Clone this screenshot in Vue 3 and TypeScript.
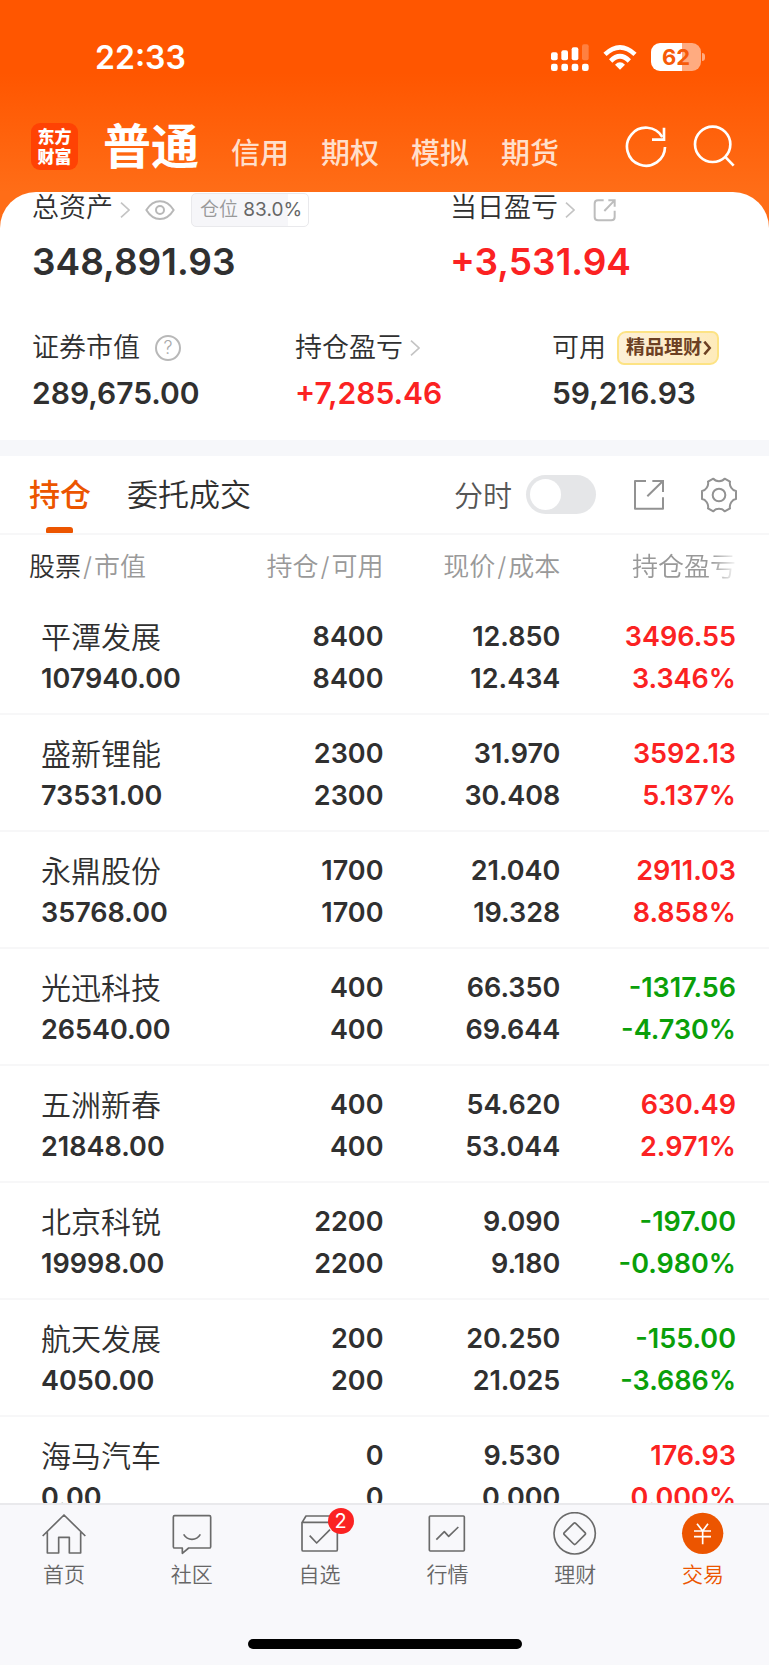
<script setup lang="ts">
import { ref } from 'vue'

interface Holding {
  name: string
  value: string
  held: string
  available: string
  price: string
  cost: string
  profit: string
  rate: string
}

interface Tab {
  label: string
  icon: 'home' | 'chat' | 'watch' | 'chart' | 'wealth' | 'trade'
  badge?: number
}

const accounts = ['信用', '期权', '模拟', '期货']

const holdings: Holding[] = [
  { name: '平潭发展', value: '107940.00', held: '8400', available: '8400', price: '12.850', cost: '12.434', profit: '3496.55', rate: '3.346%' },
  { name: '盛新锂能', value: '73531.00', held: '2300', available: '2300', price: '31.970', cost: '30.408', profit: '3592.13', rate: '5.137%' },
  { name: '永鼎股份', value: '35768.00', held: '1700', available: '1700', price: '21.040', cost: '19.328', profit: '2911.03', rate: '8.858%' },
  { name: '光迅科技', value: '26540.00', held: '400', available: '400', price: '66.350', cost: '69.644', profit: '-1317.56', rate: '-4.730%' },
  { name: '五洲新春', value: '21848.00', held: '400', available: '400', price: '54.620', cost: '53.044', profit: '630.49', rate: '2.971%' },
  { name: '北京科锐', value: '19998.00', held: '2200', available: '2200', price: '9.090', cost: '9.180', profit: '-197.00', rate: '-0.980%' },
  { name: '航天发展', value: '4050.00', held: '200', available: '200', price: '20.250', cost: '21.025', profit: '-155.00', rate: '-3.686%' },
  { name: '海马汽车', value: '0.00', held: '0', available: '0', price: '9.530', cost: '0.000', profit: '176.93', rate: '0.000%' },
]

const tabs: Tab[] = [
  { label: '首页', icon: 'home' },
  { label: '社区', icon: 'chat' },
  { label: '自选', icon: 'watch', badge: 2 },
  { label: '行情', icon: 'chart' },
  { label: '理财', icon: 'wealth' },
  { label: '交易', icon: 'trade' },
]

const activeTab = ref('交易')
const timeline = ref(false)
</script>

<template>
  <div class="page">
    <header class="top">
      <div class="status">
        <time class="clock">22:33</time>
        <div class="status-icons">
          <svg class="signal" viewBox="501 131 114 81" fill="#fff" aria-hidden="true">
            <rect x="501" y="156" width="20" height="24" rx="6" />
            <rect x="532" y="150" width="20" height="30" rx="6" />
            <rect x="563" y="141" width="20" height="39" rx="6" />
            <rect x="594" y="132" width="20" height="48" rx="6" opacity=".25" />
            <rect x="501" y="190" width="20" height="22" rx="7" />
            <rect x="532" y="190" width="20" height="22" rx="7" />
            <rect x="563" y="190" width="20" height="22" rx="7" />
            <rect x="594" y="190" width="20" height="22" rx="7" />
          </svg>
          <svg class="wifi" viewBox="656 131 102 78" fill="none" stroke="#fff" stroke-width="14" aria-hidden="true">
            <path d="M662 162Q707 120 752 162" />
            <path d="M679 182Q707 154 735 182" />
            <path d="M692 193Q707 179 722 193L707 208Z" fill="#fff" stroke="none" />
          </svg>
          <div class="battery"><span class="charge">62</span></div>
        </div>
      </div>
      <div class="nav">
        <div class="logo">东方<br />财富</div>
        <nav class="accounts">
          <a class="account current" href="#normal">普通</a>
          <a v-for="item in accounts" :key="item" class="account" href="#account">{{ item }}</a>
        </nav>
        <div class="actions">
          <button type="button" aria-label="刷新">
            <svg viewBox="721 375 126 132" fill="none" stroke="#fff" stroke-width="8">
              <path d="M841 441A57 57 0 1 1 833 411" />
              <path d="M838 383V419H802" />
            </svg>
          </button>
          <button type="button" aria-label="搜索">
            <svg viewBox="926 375 126 132" fill="none" stroke="#fff" stroke-width="8">
              <circle cx="985" cy="433" r="53" />
              <path d="M1022 470L1048 497" />
            </svg>
          </button>
        </div>
      </div>
    </header>

    <main class="sheet">
      <section class="summary">
        <div class="totals">
          <div>
            <div class="label">
              <span>总资产</span>
              <svg class="chevron" viewBox="360 600 30 48"><path d="M363 602L387 624L363 646" /></svg>
              <button class="eye" type="button" aria-label="隐藏金额">
                <svg viewBox="436 590 90 66" fill="none" stroke="#b8b8b8" stroke-width="6">
                  <path d="M440 623C462 588 500 588 522 623C500 659 462 659 440 623Z" stroke-linejoin="round" />
                  <circle cx="481" cy="623" r="12" />
                </svg>
              </button>
              <span class="position">仓位 <b>83.0%</b></span>
            </div>
            <div class="total">348,891.93</div>
          </div>
          <div>
            <div class="label">
              <span>当日盈亏</span>
              <svg class="chevron" viewBox="360 600 30 48"><path d="M363 602L387 624L363 646" /></svg>
              <button class="share-small" type="button" aria-label="分享当日盈亏">
                <svg viewBox="630 590 72 72" fill="none" stroke="#bdbdbd" stroke-width="6">
                  <path d="M662 597H645Q635 597 635 607V647Q635 657 645 657H685Q695 657 695 647V628" />
                  <path d="M664 629L694 598M676 597H695V616" />
                </svg>
              </button>
            </div>
            <div class="total up">+3,531.94</div>
          </div>
        </div>
        <div class="details">
          <div>
            <div class="label">
              <span>证券市值</span>
              <button class="help" type="button" aria-label="证券市值说明">?</button>
            </div>
            <div class="amount">289,675.00</div>
          </div>
          <div>
            <div class="label">
              <span>持仓盈亏</span>
              <svg class="chevron" viewBox="360 600 30 48"><path d="M363 602L387 624L363 646" /></svg>
            </div>
            <div class="amount up">+7,285.46</div>
          </div>
          <div>
            <div class="label">
              <span>可用</span>
              <a class="promo" href="#wealth">精品理财<svg viewBox="955 482 28 44"><path d="M959 484L976 504L959 524" /></svg></a>
            </div>
            <div class="amount">59,216.93</div>
          </div>
        </div>
      </section>

      <div class="toolbar">
        <div class="views">
          <button class="view current" type="button">持仓</button>
          <button class="view" type="button">委托成交</button>
        </div>
        <label class="timeline">
          <span>分时</span>
          <input v-model="timeline" class="switch" type="checkbox" role="switch" />
        </label>
        <button class="tool" type="button" aria-label="分享持仓">
          <svg viewBox="741 142 108 108" fill="none" stroke="#929292" stroke-width="6">
            <path d="M786 154H753V237H837V203" stroke-linejoin="round" />
            <path d="M805 154H837V187M790 200L836 155" />
          </svg>
        </button>
        <button class="tool" type="button" aria-label="设置">
          <svg viewBox="950 142 108 108" fill="none" stroke="#929292" stroke-width="6" stroke-linejoin="round">
            <path d="M987 147C994 157 1014 157 1021 147L1037 156C1034 168 1044 183 1055 184V208C1044 209 1034 224 1037 236L1021 245C1014 235 994 235 987 245L971 236C974 224 964 209 953 208V184C964 183 974 168 971 156Z" />
            <circle cx="1004" cy="196" r="19" />
          </svg>
        </button>
      </div>

      <div class="list">
        <table class="holdings">
          <colgroup>
            <col class="col-stock" />
            <col class="col-held" />
            <col class="col-price" />
            <col class="col-profit" />
          </colgroup>
          <thead>
            <tr>
              <th scope="col"><em>股票</em><i>/</i>市值</th>
              <th scope="col">持仓<i>/</i>可用</th>
              <th scope="col">现价<i>/</i>成本</th>
              <th scope="col"><span class="fade">持仓盈亏</span></th>
            </tr>
          </thead>
          <tbody>
            <tr v-for="row in holdings" :key="row.name">
              <td><span class="name">{{ row.name }}</span><span>{{ row.value }}</span></td>
              <td><span>{{ row.held }}</span><span>{{ row.available }}</span></td>
              <td><span>{{ row.price }}</span><span>{{ row.cost }}</span></td>
              <td :class="row.profit.startsWith('-') ? 'down' : 'up'">
                <span>{{ row.profit }}</span><span>{{ row.rate }}</span>
              </td>
            </tr>
          </tbody>
        </table>
      </div>
    </main>

    <footer class="tabbar">
      <nav class="tabs">
        <button
          v-for="tab in tabs"
          :key="tab.label"
          class="tab"
          :class="{ current: tab.label === activeTab }"
          type="button"
          @click="activeTab = tab.label"
        >
          <span class="tab-icon">
            <svg v-if="tab.icon === 'home'" viewBox="127 337 132 132">
              <path d="M129 409L193 346L257 409M143 398V460H177V413H209V460H243V398" />
            </svg>
            <svg v-else-if="tab.icon === 'chat'" viewBox="511 337 132 132">
              <path d="M525 348H629Q633 348 633 352V441Q633 445 629 445H567L548 461V445H525Q521 445 521 441V352Q521 348 525 348Z" />
              <path d="M552 404C564 424 590 424 602 404" />
            </svg>
            <svg v-else-if="tab.icon === 'watch'" viewBox="895 337 132 132">
              <path d="M907 369L919 349H1003L1013 369M907 368H1013V450Q1013 454 1009 454H911Q907 454 907 450Z" />
              <path d="M930 408L951 430L991 390" />
            </svg>
            <svg v-else-if="tab.icon === 'chart'" viewBox="127 337 132 132">
              <rect x="140" y="349" width="105" height="105" rx="3" />
              <path d="M161 420L185 396L198 410L227 382" />
            </svg>
            <svg v-else-if="tab.icon === 'wealth'" viewBox="511 337 132 132">
              <circle cx="576" cy="401" r="62" />
              <path d="M573 371Q576 368 579 371L607 399Q610 402 607 405L579 433Q576 436 573 433L545 405Q542 402 545 399Z" />
            </svg>
            <svg v-else viewBox="895 337 132 132">
              <circle class="coin" cx="960" cy="401" r="62" />
              <path class="yen" d="M943 372L960 394L976 372M960 394V434M934 394H985M934 411H985" />
            </svg>
            <span v-if="tab.badge" class="badge">{{ tab.badge }}</span>
          </span>
          <span>{{ tab.label }}</span>
        </button>
      </nav>
      <div class="home-bar"></div>
    </footer>
  </div>
</template>

<style>
html,
body {
  margin: 0;
  background: #f8f8fb;
}
</style>

<style scoped>
.page {
  display: flex;
  flex-direction: column;
  height: 100vh;
  overflow: hidden;
  background: #ff6d17;
  color: #303030;
  font-family: Inter, "Noto Sans CJK SC", sans-serif;
}

.page * {
  box-sizing: border-box;
}

button {
  padding: 0;
  border: 0;
  background: none;
  color: inherit;
  font: inherit;
}

a {
  color: inherit;
  text-decoration: none;
}

svg {
  display: block;
}

.top {
  flex: none;
  padding-bottom: 13px;
  background: linear-gradient(#ff5600 0, #ff5600 38%, #ff6d17 100%);
  color: #fff;
}

.status {
  display: flex;
  align-items: center;
  justify-content: space-between;
  height: 114px;
  padding: 0 64px 0 95px;
}

.clock {
  font-size: 32px;
  font-weight: 600;
}

.status-icons {
  display: flex;
  align-items: center;
  gap: 14px;
}

.signal {
  width: 38px;
  height: 27px;
}

.wifi {
  width: 34px;
  height: 26px;
}

.battery {
  display: flex;
  align-items: center;
}

.battery::after {
  width: 3px;
  height: 8px;
  margin-left: 1px;
  border-radius: 0 3px 3px 0;
  background: #ffab80;
  content: "";
}

.charge {
  width: 50px;
  border-radius: 9px;
  background: linear-gradient(90deg, #fff 63%, #ffab80 63%);
  color: #f65a08;
  font-size: 22px;
  font-weight: 700;
  line-height: 28px;
  text-align: center;
}

.nav {
  display: flex;
  align-items: center;
  height: 65px;
  padding: 0 34px 0 31px;
}

.logo {
  height: 47px;
  width: 47px;
  padding-top: 3px;
  border-radius: 9px;
  background: #ff4204;
  font-family: "Noto Sans CJK SC", sans-serif;
  font-size: 17px;
  font-weight: 900;
  line-height: 20px;
  text-align: center;
}

.accounts {
  display: flex;
  flex: 1;
  align-items: baseline;
  gap: 32px;
  margin-left: 25px;
  padding-top: 7px;
  line-height: 65px;
}

.account {
  color: #ffdfcb;
  font-size: 29px;
  font-weight: 500;
}

.account.current {
  color: #fff;
  font-size: 48px;
  font-weight: 700;
}

.actions {
  display: flex;
  gap: 26px;
}

.actions svg {
  width: 42px;
  height: 44px;
}

.sheet {
  display: flex;
  flex: 1;
  flex-direction: column;
  min-height: 0;
  border-radius: 36px 36px 0 0;
  background: #fff;
}

.summary {
  padding: 0 32px 28px;
  border-bottom: 16px solid #f6f7fa;
}

.totals {
  display: grid;
  grid-template-columns: 418fr 287fr;
}

.details {
  display: grid;
  grid-template-columns: 263fr 257fr 185fr;
  padding-top: 44px;
}

.label {
  display: flex;
  align-items: center;
  height: 35px;
  font-size: 27px;
  font-weight: 350;
  line-height: 32px;
  white-space: nowrap;
}

.totals .label > span:first-child {
  padding-bottom: 3px;
}

.chevron {
  width: 10px;
  height: 16px;
  margin-left: 7px;
  fill: none;
  stroke: #c4c4c4;
  stroke-width: 5;
}

.eye {
  margin: 0 16px 0 15px;
}

.eye svg {
  width: 30px;
  height: 22px;
}

.position {
  padding: 0 6px 0 8px;
  border: 1px solid #e9e9ec;
  border-radius: 5px;
  background: linear-gradient(90deg, #f6f6f9 83%, #fff 83%);
  color: #999;
  font-size: 19px;
  line-height: 32px;
}

.position b {
  color: #666;
  font-weight: 400;
}

.share-small {
  margin-left: 18px;
}

.share-small svg {
  width: 24px;
  height: 24px;
}

.total {
  padding-top: 11px;
  font-size: 37px;
  font-weight: 600;
  line-height: 48px;
}

.amount {
  padding-top: 9px;
  font-size: 30px;
  font-weight: 600;
  line-height: 38px;
}

.up {
  color: #fb2222;
}

.down {
  color: #0a9f0a;
}

.help {
  width: 26px;
  height: 26px;
  margin-left: 15px;
  border: 2px solid #b8b8b8;
  border-radius: 50%;
  color: #aaa;
  font-size: 18px;
  line-height: 22px;
}

.promo {
  display: flex;
  align-items: center;
  gap: 1px;
  height: 34px;
  margin-left: 11px;
  padding: 0 5px 0 7px;
  border: 2px solid #fde384;
  border-radius: 9px 7px 9px 7px;
  background: linear-gradient(90deg, #fdf0d8, #feebbb);
  color: #6c4023;
  font-size: 19px;
  font-weight: 700;
}

.promo svg {
  width: 9px;
  height: 14px;
  fill: none;
  stroke: #6c4023;
  stroke-width: 8;
}

.toolbar {
  display: flex;
  align-items: center;
  height: 79px;
  flex: none;
  padding: 0 32px 0 29px;
  border-bottom: 2px solid #f7f7f8;
}

.views {
  display: flex;
  flex: 1;
  gap: 36px;
  align-self: stretch;
}

.view {
  position: relative;
  padding-bottom: 4px;
  font-size: 31px;
  font-weight: 350;
}

.view.current {
  color: #ec5500;
  font-weight: 500;
}

.view.current::after {
  position: absolute;
  bottom: 0;
  left: 50%;
  width: 27px;
  height: 6px;
  margin-left: -14px;
  border-radius: 3px 3px 1px 1px;
  background: #ec5500;
  content: "";
}

.timeline {
  display: flex;
  align-items: center;
  gap: 14px;
  margin-right: 1px;
  color: #555;
  font-size: 29px;
  font-weight: 350;
}

.timeline span {
  padding-bottom: 2px;
}

.switch {
  display: flex;
  align-items: center;
  width: 70px;
  height: 39px;
  margin: 0;
  padding: 4px;
  border-radius: 20px;
  background: #e5e6e8;
  appearance: none;
}

.switch::before {
  width: 31px;
  height: 31px;
  border-radius: 50%;
  background: #fff;
  content: "";
}

.switch:checked {
  justify-content: flex-end;
  background: #ec5500;
}

.tool {
  margin-left: 34px;
}

.tool svg {
  width: 36px;
  height: 36px;
}

.list {
  flex: 1;
  min-height: 0;
  overflow-y: auto;
  scrollbar-width: none;
}

.holdings {
  width: 100%;
  border-collapse: separate;
  border-spacing: 0;
  table-layout: fixed;
}

.col-stock {
  width: 27%;
}

.col-held,
.col-price {
  width: 23%;
}

.col-profit {
  width: 27%;
}

th {
  position: sticky;
  top: 0;
  height: 63px;
  padding: 0 1px 5px 0;
  background: #fff;
  color: #999;
  font-size: 26px;
  font-weight: 350;
  text-align: right;
  white-space: nowrap;
}

th em {
  color: #303030;
  font-style: normal;
}

th i {
  margin: 0 2px;
  font-style: normal;
}

th:first-child {
  padding-left: 29px;
  text-align: left;
}

th:last-child,
td:last-child {
  padding-right: 33px;
}

.fade {
  mask-image: linear-gradient(90deg, #000 76%, transparent 102%);
}

td {
  height: 117px;
  padding: 5px 1px 0 0;
  border-bottom: 2px solid #f7f7f8;
  font-size: 27px;
  font-weight: 600;
  line-height: 42px;
  text-align: right;
}

td:first-child {
  padding-left: 41px;
  text-align: left;
}

td span {
  display: block;
}

td .name {
  font-size: 30px;
  font-weight: 350;
}

.tabbar {
  flex: none;
  padding-bottom: 16px;
  border-top: 2px solid #e9e9ec;
  background: #f8f8fb;
}

.tabs {
  display: grid;
  grid-template-columns: repeat(6, 1fr);
  padding-right: 2px;
}

.tab {
  display: flex;
  flex-direction: column;
  align-items: center;
  padding-top: 7px;
  color: #666;
  font-size: 21px;
  font-weight: 350;
  line-height: 38px;
}

.tab.current {
  color: #ec5500;
}

.tab-icon {
  position: relative;
}

.tab-icon svg {
  width: 44px;
  height: 44px;
  fill: none;
  stroke: #6a6a6a;
  stroke-width: 5;
  stroke-linejoin: round;
}

.tab-icon .coin {
  fill: #ec5500;
  stroke: none;
}

.tab-icon .yen {
  stroke: #fff;
}

.badge {
  position: absolute;
  top: -4px;
  right: -12px;
  width: 26px;
  height: 26px;
  border-radius: 50%;
  background: #fb2222;
  color: #fff;
  font-size: 20px;
  font-weight: 400;
  line-height: 26px;
  text-align: center;
}

.home-bar {
  width: 274px;
  height: 10px;
  margin: 45px auto 0;
  border-radius: 5px;
  background: #000;
}
</style>
